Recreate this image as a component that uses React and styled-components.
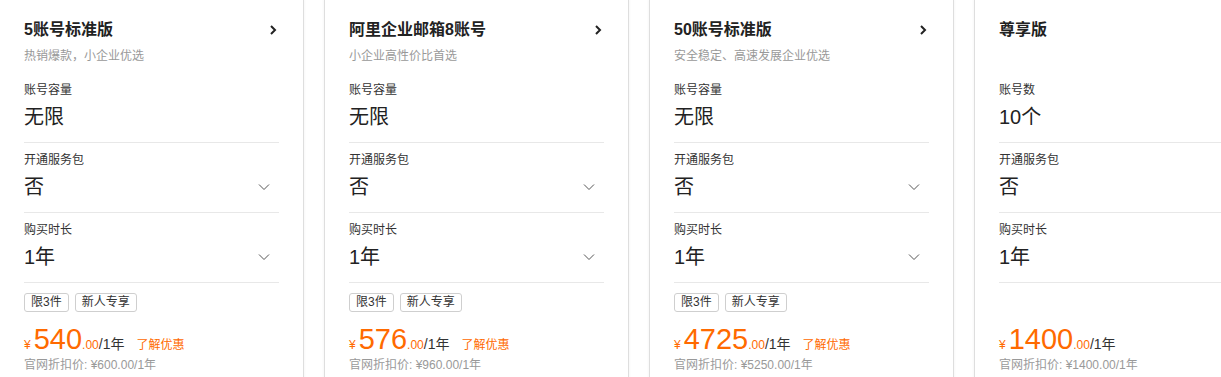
import React from 'react'
import styled, { createGlobalStyle } from 'styled-components'

const GlobalStyle = createGlobalStyle`
    body {
        margin: 0;
        background: #fff;
        overflow: hidden;
        font-family: "Liberation Sans", "Noto Sans CJK SC", sans-serif;
        color: #333;
    }
`

const plans = [
    {
        title: '5账号标准版',
        sub: '热销爆款，小企业优选',
        link: true,
        firstLabel: '账号容量',
        firstValue: '无限',
        select: true,
        tags: ['限3件', '新人专享'],
        price: '540',
        promo: true,
        orig: '¥600.00/1年',
    },
    {
        title: '阿里企业邮箱8账号',
        sub: '小企业高性价比首选',
        link: true,
        firstLabel: '账号容量',
        firstValue: '无限',
        select: true,
        tags: ['限3件', '新人专享'],
        price: '576',
        promo: true,
        orig: '¥960.00/1年',
    },
    {
        title: '50账号标准版',
        sub: '安全稳定、高速发展企业优选',
        link: true,
        firstLabel: '账号容量',
        firstValue: '无限',
        select: true,
        tags: ['限3件', '新人专享'],
        price: '4725',
        promo: true,
        orig: '¥5250.00/1年',
    },
    {
        title: '尊享版',
        sub: '',
        link: false,
        firstLabel: '账号数',
        firstValue: '10个',
        select: false,
        tags: [],
        price: '1400',
        promo: false,
        orig: '¥1400.00/1年',
    },
]

const CardRow = styled.div`
    display: flex;
    gap: 20px;
    margin: -1px 0 0 -1px;
`

const Card = styled.div`
    flex: 0 0 305px;
    box-sizing: border-box;
    border: 1px solid #dedede;
    box-shadow: 0 0 3px rgba(0, 0, 0, 0.06);
    padding: 0 24px 24px;
    background: #fff;
`

const Header = styled.div`
    height: 73px;
    box-sizing: border-box;
    padding-top: 18px;
`

const TitleRow = styled.div`
    display: flex;
    align-items: center;
    justify-content: space-between;
    height: 24px;
`

const Title = styled.div`
    font-size: 16px;
    font-weight: bold;
    line-height: 24px;
    color: #222;
`

const Sub = styled.div`
    margin-top: 5px;
    font-size: 12px;
    line-height: 18px;
    color: #999;
`

const Section = styled.div`
    padding: 8px 0 10px;
    border-bottom: 1px solid #e8e8e8;
    &:first-of-type {
        padding-bottom: 9px;
    }
`

const Label = styled.div`
    font-size: 12px;
    line-height: 18px;
    color: #333;
`

const ValueRow = styled.div`
    margin-top: 3px;
    display: flex;
    align-items: center;
    justify-content: space-between;
    padding-right: 9px;
    height: 30px;
`

const Value = styled.div`
    font-size: 20px;
    line-height: 30px;
    color: #222;
`

const Tags = styled.div`
    display: flex;
    gap: 6px;
    height: 19px;
    margin-top: 10px;
`

const Tag = styled.span`
    box-sizing: border-box;
    height: 19px;
    padding: 0 6px;
    border: 1px solid #cfcfcf;
    border-radius: 3px;
    font-size: 12px;
    line-height: 17px;
    color: #333;
`

const PriceRow = styled.div`
    margin-top: 13px;
    display: flex;
    align-items: baseline;
    height: 28px;
    line-height: 28px;
    color: #ff6a00;
`

const Yen = styled.span`
    font-size: 12px;
    margin-right: 3px;
`

const Amount = styled.span`
    font-size: 29px;
`

const Cents = styled.span`
    font-size: 12px;
`

const Unit = styled.span`
    font-size: 14px;
    color: #333;
`

const Promo = styled.span`
    margin-left: 12px;
    font-size: 12px;
    color: #ff6a00;
`

const Orig = styled.div`
    margin-top: 3px;
    font-size: 12px;
    line-height: 18px;
    color: #999;
`

const ArrowRight = () => (
    <svg width="12" height="14" viewBox="0 0 12 14">
        <path d="M4 3 L8 7 L4 11" fill="none" stroke="#222" strokeWidth="2" />
    </svg>
)

const ArrowDown = () => (
    <svg width="12" height="8" viewBox="0 0 12 8">
        <path d="M1 1.5 L6 6.5 L11 1.5" fill="none" stroke="#555" strokeWidth="1" />
    </svg>
)

const Field = ({ label, value, select }) => (
    <Section>
        <Label>{label}</Label>
        <ValueRow>
            <Value>{value}</Value>
            {select && <ArrowDown />}
        </ValueRow>
    </Section>
)

const PlanCard = ({ plan }) => (
    <Card>
        <Header>
            <TitleRow>
                <Title>{plan.title}</Title>
                {plan.link && <ArrowRight />}
            </TitleRow>
            {plan.sub && <Sub>{plan.sub}</Sub>}
        </Header>
        <Field label={plan.firstLabel} value={plan.firstValue} />
        <Field label="开通服务包" value="否" select={plan.select} />
        <Field label="购买时长" value="1年" select={plan.select} />
        <Tags>
            {plan.tags.map(tag => <Tag key={tag}>{tag}</Tag>)}
        </Tags>
        <PriceRow>
            <Yen>¥</Yen>
            <Amount>{plan.price}</Amount>
            <Cents>.00</Cents>
            <Unit>/1年</Unit>
            {plan.promo && <Promo>了解优惠</Promo>}
        </PriceRow>
        <Orig>官网折扣价: {plan.orig}</Orig>
    </Card>
)

export default function App() {
    return (
        <>
            <GlobalStyle />
            <CardRow>
                {plans.map(plan => <PlanCard plan={plan} key={plan.title} />)}
            </CardRow>
        </>
    )
}
